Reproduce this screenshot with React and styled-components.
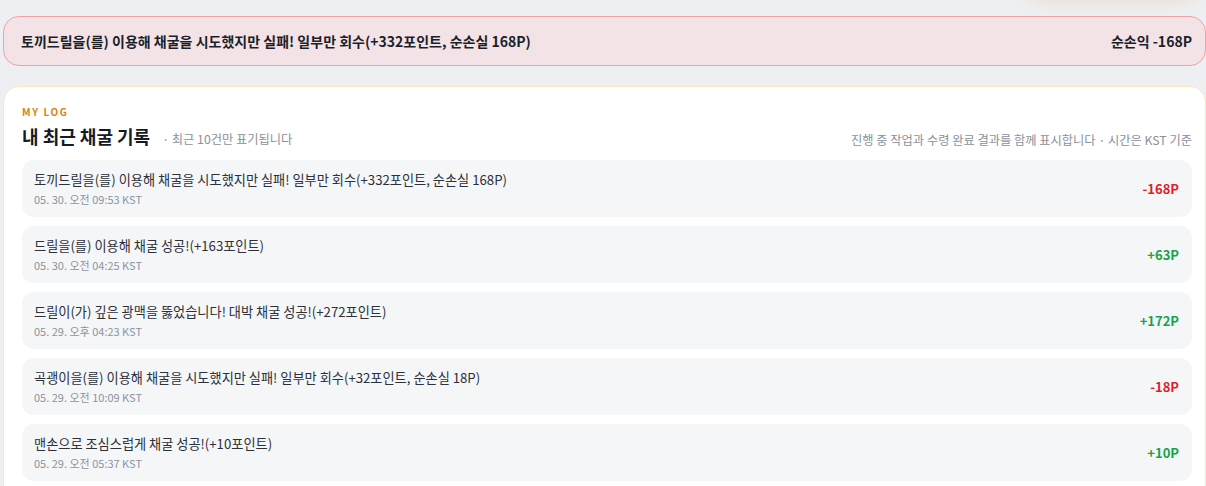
import React from "react"
import styled, { createGlobalStyle } from "styled-components"

const GlobalStyle = createGlobalStyle`
  html, body {
    margin: 0;
    padding: 0;
    background: #eeeff2;
    overflow: hidden;
  }
  body {
    font-family: "Noto Sans CJK KR", "Noto Sans", sans-serif;
    color: #1f2430;
  }
`

const logs = [
  { id: 1, text: "토끼드릴을(를) 이용해 채굴을 시도했지만 실패! 일부만 회수(+332포인트, 순손실 168P)", time: "05. 30. 오전 09:53 KST", amount: -168 },
  { id: 2, text: "드릴을(를) 이용해 채굴 성공!(+163포인트)", time: "05. 30. 오전 04:25 KST", amount: 63 },
  { id: 3, text: "드릴이(가) 깊은 광맥을 뚫었습니다! 대박 채굴 성공!(+272포인트)", time: "05. 29. 오후 04:23 KST", amount: 172 },
  { id: 4, text: "곡괭이을(를) 이용해 채굴을 시도했지만 실패! 일부만 회수(+32포인트, 순손실 18P)", time: "05. 29. 오전 10:09 KST", amount: -18 },
  { id: 5, text: "맨손으로 조심스럽게 채굴 성공!(+10포인트)", time: "05. 29. 오전 05:37 KST", amount: 10 },
]

export default function App() {
  return (
    <>
      <GlobalStyle />
      <Page>
        <Banner>
          <span>토끼드릴을(를) 이용해 채굴을 시도했지만 실패! 일부만 회수(+332포인트, 순손실 168P)</span>
          <span>순손익 -168P</span>
        </Banner>
        <Card>
          <Eyebrow>MY LOG</Eyebrow>
          <Header>
            <TitleWrap>
              <Title>내 최근 채굴 기록</Title>
              <Sub>· 최근 10건만 표기됩니다</Sub>
            </TitleWrap>
            <Sub>진행 중 작업과 수령 완료 결과를 함께 표시합니다 · 시간은 KST 기준</Sub>
          </Header>
          <List>
            {logs.map((l) => (
              <Item key={l.id}>
                <div>
                  <ItemText>{l.text}</ItemText>
                  <ItemTime>{l.time}</ItemTime>
                </div>
                <Amount positive={l.amount > 0}>
                  {l.amount > 0 ? `+${l.amount}P` : `${l.amount}P`}
                </Amount>
              </Item>
            ))}
          </List>
        </Card>
      </Page>
    </>
  )
}

const Page = styled.div`
position: relative;
margin-left: 3px;
width: 1203px;
padding-top: 16px;
display: flex;
flex-direction: column;
gap: 20px;
&::before {
    content: "";
    position: absolute;
    top: -40px;
    right: 10px;
    width: 170px;
    height: 36px;
    border-radius: 18px;
    box-shadow: 0 6px 14px rgba(236, 190, 150, 0.35);
}
`

const Banner = styled.div`
box-sizing: border-box;
height: 50px;
display: flex;
align-items: center;
justify-content: space-between;
padding: 0 13px 0 17px;
background: #f3e3e6;
border: 1px solid #eea3a6;
border-radius: 16px;
font-size: 14px;
font-weight: 700;
color: #1b1f2a;
`

const Card = styled.div`
box-sizing: border-box;
background: #ffffff;
border: 1px solid #fbe6c4;
border-radius: 16px;
padding: 18px 13px 20px 18px;
min-height: 420px;
`

const Eyebrow = styled.div`
font-size: 10px;
font-weight: 700;
letter-spacing: 1.6px;
color: #d9820b;
line-height: 14px;
`

const Header = styled.div`
display: flex;
align-items: flex-end;
justify-content: space-between;
margin-top: 4px;
`

const TitleWrap = styled.div`
display: flex;
align-items: baseline;
gap: 12px;
`

const Title = styled.div`
font-size: 18px;
font-weight: 700;
color: #161a24;
line-height: 26px;
`

const Sub = styled.div`
font-size: 12.25px;
color: #8b9099;
line-height: 18px;
`

const List = styled.div`
display: flex;
flex-direction: column;
gap: 9px;
margin-top: 11px;
`

const Item = styled.div`
box-sizing: border-box;
height: 57px;
display: flex;
align-items: center;
justify-content: space-between;
padding: 0 13px 0 12px;
background: #f5f6f8;
border-radius: 12px;
`

const ItemText = styled.div`
font-size: 13.2px;
color: #2b303a;
line-height: 19px;
`

const ItemTime = styled.div`
font-size: 11px;
color: #8e939c;
line-height: 16px;
margin-top: 2px;
`

const Amount = styled.div`
font-size: 13px;
font-weight: 700;
color: ${props => props.positive ? "#16a34a" : "#e11d2a"};
`
